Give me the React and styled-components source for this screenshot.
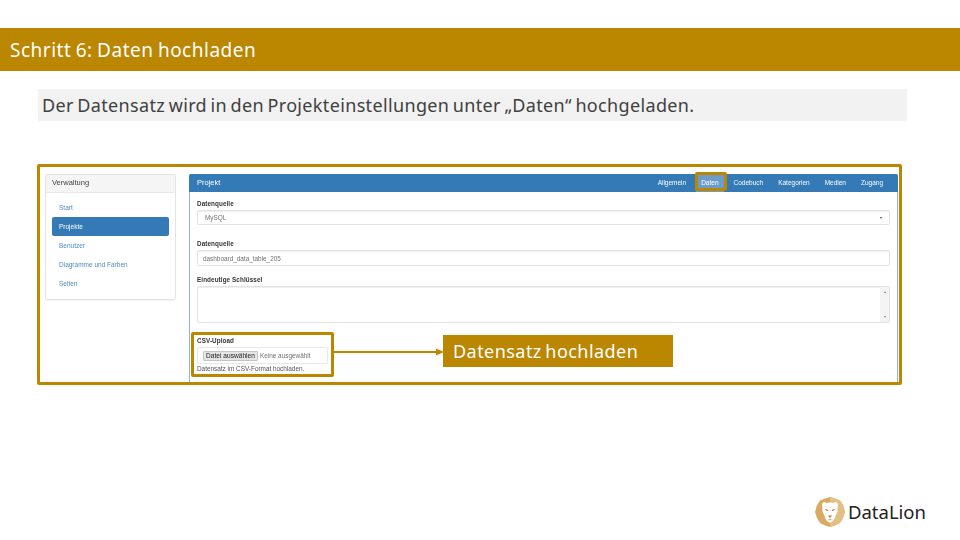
import styled, { createGlobalStyle } from "styled-components";

const GOLD = "#bb8600";

const GlobalStyle = createGlobalStyle`
  html, body {
    margin: 0;
    padding: 0;
    background: #fff;
  }
  * {
    box-sizing: border-box;
  }
`;

const Slide = styled.div`
  width: 960px;
  height: 540px;
  padding-top: 28px;
  overflow: hidden;
  display: flex;
  flex-direction: column;
  font-family: "Noto Sans", sans-serif;
`;

const TitleBar = styled.h1`
  margin: 0;
  height: 43px;
  padding-left: 10px;
  display: flex;
  align-items: center;
  background: ${GOLD};
  color: #fff;
  font-size: 19px;
  font-weight: 400;
  letter-spacing: 0.5px;
  word-spacing: -1px;
`;

const Subtitle = styled.p`
  margin: 18px 53px 0 38px;
  height: 32px;
  padding-left: 4px;
  display: flex;
  align-items: center;
  background: #f2f2f2;
  color: #404040;
  font-size: 18px;
  letter-spacing: 0.35px;
  word-spacing: -1.5px;
`;

const Frame = styled.div`
  position: relative;
  margin: 43px 0 0 37px;
  width: 865px;
  height: 221px;
  border: 3px solid ${GOLD};
  border-radius: 2px;
`;

const Shot = styled.div`
  height: 100%;
  padding: 7px 1px 0 5px;
  display: grid;
  grid-template-columns: 131px 709px;
  gap: 13px;
  overflow: hidden;
  font-family: "Liberation Sans", Arial, sans-serif;
  filter: blur(0.4px);
`;

const SideCard = styled.aside`
  height: 126px;
  border: 1px solid #e4e4e4;
  border-radius: 2px;
  box-shadow: 0 1px 1px rgba(0, 0, 0, 0.05);
`;

const SideHead = styled.div`
  height: 18px;
  padding: 0 0 2px 6px;
  display: flex;
  align-items: center;
  background: #f5f5f5;
  border-bottom: 1px solid #e8e8e8;
  color: #444;
  font-size: 7.5px;
`;

const SideNav = styled.nav`
  padding: 5px 6px 0;
  display: flex;
  flex-direction: column;
`;

const SideItem = styled.div`
  height: 19px;
  padding-left: 7px;
  display: flex;
  align-items: center;
  border-radius: 2px;
  font-size: 6.5px;
  color: ${(p) => (p.$active ? "#fff" : "#4f8cc6")};
  background: ${(p) => (p.$active ? "#337ab7" : "transparent")};
`;

const Panel = styled.section`
  height: 230px;
  border: 1px solid #8fb6d9;
  border-radius: 2px 2px 0 0;
`;

const PanelHead = styled.div`
  height: 18px;
  margin: -1px -1px 0;
  padding: 0 15px 2px 8px;
  display: flex;
  align-items: center;
  justify-content: space-between;
  background: #337ab7;
  border-radius: 2px 2px 0 0;
  color: #fff;
  font-size: 7.5px;
`;

const Tabs = styled.div`
  display: flex;
  gap: 15px;
  font-size: 6.5px;
`;

const Tab = styled.span`
  position: relative;
  color: #fff;

  ${(p) =>
    p.$active &&
    `
    &::before {
      content: "";
      position: absolute;
      inset: -4px -5px -6px -5px;
      background: #6c9dca;
      z-index: 0;
    }
  `}
`;

const TabLabel = styled.span`
  position: relative;
`;

const PanelBody = styled.div`
  padding: 7px 7px 0;
`;

const Label = styled.label`
  display: block;
  height: 10px;
  line-height: 10px;
  color: #333;
  font-size: 6.3px;
  font-weight: 700;
  letter-spacing: 0.1px;
`;

const Field = styled.div`
  height: ${(p) => p.$height || 16}px;
  margin-top: 1px;
  margin-bottom: ${(p) => p.$after || 0}px;
  padding: 0 ${(p) => p.$pad || 5}px 0 ${(p) => p.$pad || 5}px;
  display: flex;
  align-items: center;
  justify-content: space-between;
  border: 1px solid #e2e2e2;
  border-radius: 2px;
  color: #707070;
  font-size: 6.4px;
  box-shadow: inset 0 1px 1px rgba(0, 0, 0, 0.07);
`;

const Caret = styled.span`
  width: 0;
  height: 0;
  border-left: 1.5px solid transparent;
  border-right: 1.5px solid transparent;
  border-top: 2px solid #444;
`;

const ScrollBar = styled.div`
  align-self: stretch;
  width: 9px;
  margin-right: -5px;
  display: flex;
  flex-direction: column;
  justify-content: space-between;
  align-items: center;
  padding: 3px 0;
  background: #f4f4f4;
  color: #888;
  font-size: 4px;
  line-height: 4px;
`;

const FileField = styled.div`
  width: 131px;
  height: 17px;
  margin-top: 1px;
  padding-left: 5px;
  display: flex;
  align-items: center;
  gap: 2px;
  border: 1px solid #e8e8e8;
  border-radius: 2px;
  color: #707070;
  font-size: 6.4px;
`;

const FileButton = styled.span`
  width: 55px;
  height: 10px;
  display: flex;
  align-items: center;
  justify-content: center;
  background: #e4e4e4;
  border: 1px solid #c4c4c4;
  border-radius: 1px;
  color: #222;
  font-size: 6.6px;
`;

const Help = styled.div`
  height: 9px;
  line-height: 9px;
  color: #555;
  font-size: 6.4px;
`;

const Highlight = styled.div`
  position: absolute;
  border: 3px solid ${GOLD};
  border-radius: 2px;
  left: ${(p) => p.$left}px;
  top: ${(p) => p.$top}px;
  width: ${(p) => p.$width}px;
  height: ${(p) => p.$height}px;
`;

const Arrow = styled.svg`
  position: absolute;
  left: 294px;
  top: 179px;
`;

const Callout = styled.div`
  position: absolute;
  left: 403px;
  top: 168px;
  width: 230px;
  height: 32px;
  padding-left: 10px;
  display: flex;
  align-items: center;
  background: ${GOLD};
  color: #fff;
  font-family: "Noto Sans", sans-serif;
  font-size: 18px;
  letter-spacing: 0.45px;
  word-spacing: -1.5px;
`;

const Footer = styled.footer`
  margin-top: 112px;
  padding-right: 34px;
  display: flex;
  justify-content: flex-end;
  align-items: center;
  gap: 3px;
`;

const Brand = styled.span`
  color: #222;
  font-size: 18.5px;
  line-height: 30px;
`;

function LionLogo() {
  return (
    <svg width="30" height="30" viewBox="0 0 30 30">
      <polygon
        points="15,0 20,1.5 25,3.5 28,8 30,15 28,21 25,26 20,28.5 15,30 10,28.5 5,26 2,21 0,15 2,8 5,3.5 10,1.5"
        fill="#d9ab62"
      />
      <polygon
        points="15,0 25,3.5 28,8 30,15 28,21 25,26 15,30"
        fill="#e3bf85"
      />
      <path
        d="M9 5 L12 6 C14 5.4 16 5.4 18 6 L21 5 C23 5.5 23.5 8 22.5 10 C23 13 22.5 16 20.5 18.5 C20 22 18 25 15 25.5 C12 25 10 22 9.5 18.5 C7.5 16 7 13 7.5 10 C6.5 8 7 5.5 9 5 Z"
        fill="#fff"
      />
      <path
        d="M10.5 12.5 L13 13.5 M19.5 12.5 L17 13.5"
        stroke="#9a6f2a"
        strokeWidth="1.1"
        fill="none"
      />
      <path d="M12.8 18.5 H17.2 L15 21 Z" fill="#b58a45" />
      <path d="M15 21 V23 M12.5 23 L15 22.6 L17.5 23" stroke="#c9a265" strokeWidth="0.7" fill="none" />
    </svg>
  );
}

export default function App() {
  const sideItems = ["Start", "Projekte", "Benutzer", "Diagramme und Farben", "Seiten"];
  const tabs = ["Allgemein", "Daten", "Codebuch", "Kategorien", "Medien", "Zugang"];

  return (
    <Slide>
      <GlobalStyle />
      <TitleBar>Schritt 6: Daten hochladen</TitleBar>
      <Subtitle>Der Datensatz wird in den Projekteinstellungen unter „Daten“ hochgeladen.</Subtitle>

      <Frame>
        <Shot>
          <SideCard>
            <SideHead>Verwaltung</SideHead>
            <SideNav>
              {sideItems.map((item) => (
                <SideItem key={item} $active={item === "Projekte"}>
                  {item}
                </SideItem>
              ))}
            </SideNav>
          </SideCard>

          <Panel>
            <PanelHead>
              Projekt
              <Tabs>
                {tabs.map((tab) => (
                  <Tab key={tab} $active={tab === "Daten"}>
                    <TabLabel>{tab}</TabLabel>
                  </Tab>
                ))}
              </Tabs>
            </PanelHead>
            <PanelBody>
              <Label>Datenquelle</Label>
              <Field $height={15} $after={14} $pad={7}>
                MySQL
                <Caret />
              </Field>
              <Label>Datenquelle</Label>
              <Field $after={9}>dashboard_data_table_205</Field>
              <Label>Eindeutige Schlüssel</Label>
              <Field $height={37} $after={13}>
                <span />
                <ScrollBar>
                  <span>▴</span>
                  <span>▾</span>
                </ScrollBar>
              </Field>
              <Label>CSV-Upload</Label>
              <FileField>
                <FileButton>Datei auswählen</FileButton>
                Keine ausgewählt
              </FileField>
              <Help>Datensatz im CSV-Format hochladen.</Help>
            </PanelBody>
          </Panel>
        </Shot>

        <Highlight $left={655} $top={5} $width={32} $height={19} />
        <Highlight $left={151} $top={165} $width={143} $height={45} />
        <Arrow width="110" height="12" viewBox="0 0 110 12">
          <line x1="0" y1="6" x2="103" y2="6" stroke={GOLD} strokeWidth="2" />
          <polygon points="102,2.5 110,6 102,9.5" fill={GOLD} />
        </Arrow>
        <Callout>Datensatz hochladen</Callout>
      </Frame>

      <Footer>
        <LionLogo />
        <Brand>DataLion</Brand>
      </Footer>
    </Slide>
  );
}
